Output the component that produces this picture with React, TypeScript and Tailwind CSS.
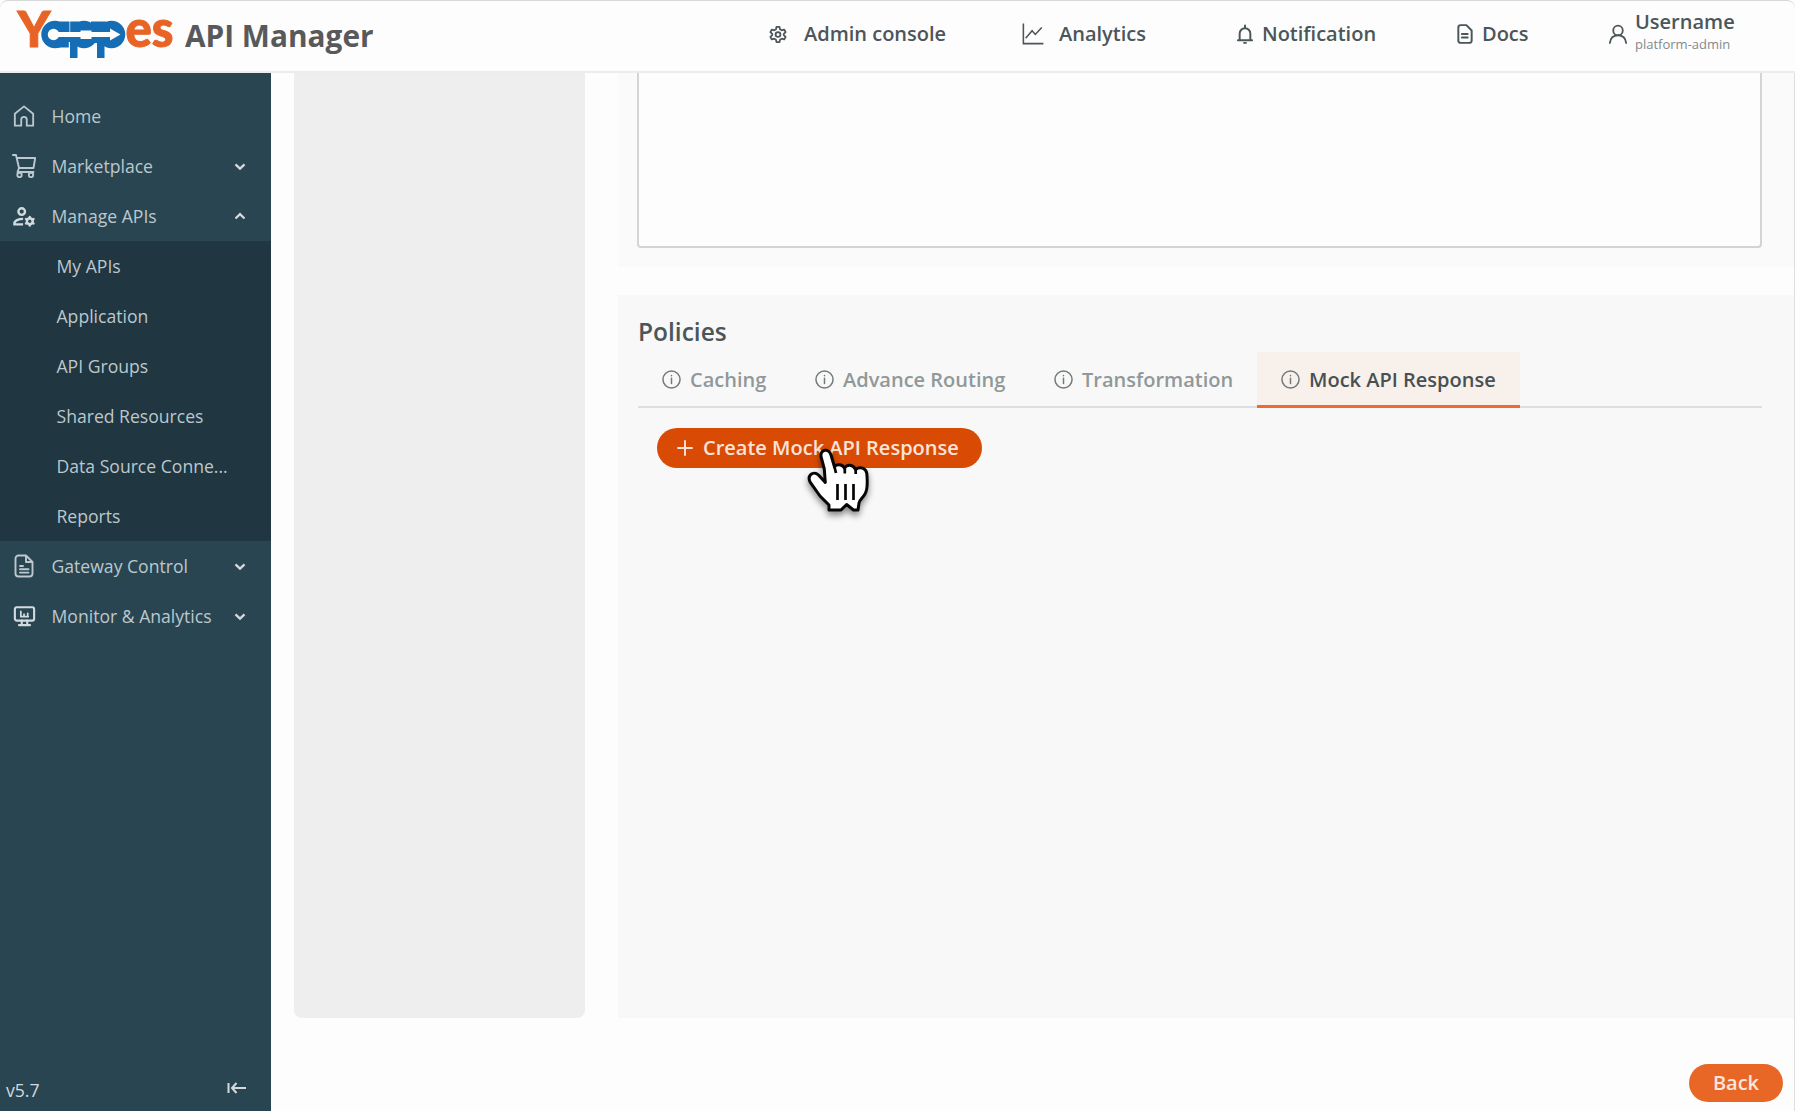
import type { ReactNode, SVGProps } from 'react';

const Stroke = (props: SVGProps<SVGSVGElement>) => (
  <svg viewBox="0 0 24 24" fill="none" stroke="currentColor" strokeLinecap="round" strokeLinejoin="round" {...props} />
);

const Logo = () => (
  <svg viewBox="16 7 160 54" className="h-[54px] w-[160px] shrink-0 overflow-visible" role="img" aria-label="Yappes">
    <g fill="#156db5">
      <circle cx="55" cy="34.5" r="13.700" />
      <circle cx="84" cy="34.5" r="13.700" />
      <circle cx="111.5" cy="34.5" r="13.700" />
      <path d="M60 21.500H79V31H60ZM91 21.500H106V31H91ZM56 38H69V47.500H56Z" />
      <path d="M66 26H101V43H66ZM70 36H77.500V58H70ZM97 36H104.500V58H97Z" />
    </g>
    <g fill="#fdfdfd">
      <circle cx="53.500" cy="34.500" r="5.700" />
      <path d="M54 32H110V28.500L120.500 34.500L110 40.500V37H54Z" />
      <path d="M80.500 30.500H91.500V39H80.500Z" />
      <path d="M69.500 21H70.200V32.500H69.500ZM68.800 42H70V49H68.800Z" />
    </g>
    <g fontFamily="Lato" fontWeight="900" fill="#e86426" stroke="#e86426" strokeWidth="1">
      <text x="17.500" y="47" fontSize="49.500" textLength="33" lengthAdjust="spacingAndGlyphs">Y</text>
      <text x="125.500" y="47.200" fontSize="51" textLength="48" lengthAdjust="spacingAndGlyphs">es</text>
    </g>
  </svg>
);

const Gear = () => (
  <Stroke className="h-[19px] w-[18px]" strokeWidth={2.400}>
    <path d="M10 1.800h4l.7 3.300 2.300 1.300 3.200-1 2 3.400-2.500 2.300v1.800l2.500 2.300-2 3.400-3.200-1-2.300 1.300-.7 3.300h-4l-.7-3.300L7 17.600l-3.200 1-2-3.400 2.500-2.300v-1.800L1.800 8.800l2-3.400 3.200 1 2.300-1.300z" />
    <circle cx="12" cy="12" r="3.200" />
  </Stroke>
);
const ChartLine = () => (
  <Stroke className="size-[22px]" strokeWidth={1.700} strokeLinecap="square" strokeLinejoin="miter">
    <path d="M1.500 1.500V22.500H22.500M4.500 16L11 8.500L14.500 12.500L21 5.500" />
  </Stroke>
);
const Bell = () => (
  <Stroke viewBox="0 0 18 22" className="h-5 w-4" strokeWidth={2.200}>
    <path d="M1 18H17M3 18V10.500a6 6 0 0 1 12 0V18M9 4V1.500M8 21h2" />
  </Stroke>
);
const FileSmall = () => (
  <Stroke viewBox="0 0 18 22" className="h-5 w-4" strokeWidth={2.200}>
    <path d="M10.500 1H4a2.500 2.500 0 0 0-2.500 2.500v15A2.500 2.500 0 0 0 4 21h10a2.500 2.500 0 0 0 2.500-2.500V7zM5.500 11H12M5.500 15H12" />
  </Stroke>
);
const User = () => (
  <Stroke viewBox="0 0 20 22" className="h-5 w-[18px]" strokeWidth={2}>
    <circle cx="10" cy="7" r="5.300" />
    <path d="M1 21C1.500 15.500 5 12.500 10 12.500S18.500 15.500 19 21" />
  </Stroke>
);

const Info = () => (
  <Stroke className="size-[19px] shrink-0 text-[#74797b]" strokeWidth={1.900}>
    <circle cx="12" cy="12" r="10.800" />
    <path d="M12 10.500v6.500M12 7v.2" />
  </Stroke>
);

const Home = () => (
  <Stroke className="h-[22px] w-[22px]" strokeWidth={2}>
    <path d="M2 22.500V9.500L12 1.500l10 8v13h-7v-6.500a3 3 0 0 0-6 0v6.500z" />
  </Stroke>
);
const Cart = () => (
  <Stroke className="size-6" strokeWidth={1.900}>
    <path d="M.8 1H4l3 13h14.500L23.200 4H5M7 14l-1.500 4H21.500" />
    <circle cx="7.500" cy="21" r="2.200" />
    <circle cx="19" cy="21" r="2.200" />
  </Stroke>
);
const UserGear = () => (
  <Stroke className="mt-1 size-[22px] text-[#d3dade]" strokeWidth={2.600}>
    <circle cx="9.500" cy="5" r="3.600" />
    <path d="M11 13C6 13 1.500 15 1.500 18v1H11" strokeLinecap="butt" />
    <circle cx="18.300" cy="15.500" r="3.200" />
    <path d="M18.300 10.800v1.500M18.300 18.700v1.500M14.200 13.100l1.300.8M21.100 17.100l1.300.8M14.200 17.900l1.300-.8M21.100 13.900l1.300-.8" />
  </Stroke>
);
const FileText = () => (
  <Stroke viewBox="0 0 20 24" className="h-6 w-5" strokeWidth={1.900}>
    <path d="M12 1.500H4.500a3 3 0 0 0-3 3v15a3 3 0 0 0 3 3h11a3 3 0 0 0 3-3V8zV8h6.500M6 12h3M6 15.300h8.500M6 18.600h8.500" />
  </Stroke>
);
const Monitor = () => (
  <Stroke className="h-[22px] w-[23px] text-[#d3dade]" strokeWidth={2.300}>
    <rect x="1.500" y="2.500" width="21" height="14.500" rx="2" />
    <path d="M9 17v4.500M15 17v4.500M6 22h12" />
    <path d="M8 7v5.500M11.500 10v2.500M15.500 9v3.500M8 12.800h8" strokeWidth={1.900} />
  </Stroke>
);
const Chevron = ({ up }: { up?: boolean }) => (
  <Stroke viewBox="0 0 12 12" className="mr-[25px] size-3 text-[#d3dade]" strokeWidth={2.300} strokeLinecap="butt" strokeLinejoin="miter">
    <path d={up ? 'M1.500 8.500L6 4.200L10.500 8.500' : 'M1.500 4.300L6 8.600L10.500 4.300'} />
  </Stroke>
);
const Collapse = () => (
  <Stroke viewBox="0 0 20 12" className="-mt-1 h-3 w-5" strokeWidth={2} strokeLinecap="butt" strokeLinejoin="miter">
    <path d="M1.500 1V11M19 6H5M9.500 1L5 6L9.500 11" />
  </Stroke>
);

const Hand = () => (
  <svg viewBox="0 0 64 68" className="pointer-events-none absolute top-[19px] left-[151px] h-[68px] w-16 overflow-visible drop-shadow-[0_4px_3px_rgba(0,0,0,0.45)]">
    <path
      d="M13 9.500C12 2 21 1 23 8L26.500 20C28 17 34 16.500 36.500 21C39 17 45 17 47.500 22.500C52 19 58 21 58.800 26.500C59.500 34 60 42 57 47C54.500 51 51.500 53 51 56L50 63H45.500L38.600 57.500L33 63H21V58L12 49L2.500 35.700C-1.500 29 5 23 10.500 28L17.300 35.500L16.300 22Z"
      fill="#fff"
      stroke="#060606"
      strokeWidth="3"
      strokeLinejoin="round"
    />
    <path d="M26.500 20L28 26M36.800 21V26.500M47.700 23V27M29.500 37V53M37.500 37V53M45.500 37V53" fill="none" stroke="#060606" strokeWidth="2.700" />
  </svg>
);

const MenuRow = ({ icon, label, children }: { icon: ReactNode; label: string; children?: ReactNode }) => (
  <div className="flex h-[50px] items-center">
    <span className="flex w-12 shrink-0 justify-center">{icon}</span>
    <span className="ml-[3.500px] flex-1 whitespace-nowrap">{label}</span>
    {children}
  </div>
);

const manageItems = ['My APIs', 'Application', 'API Groups', 'Shared Resources', 'Data Source Conne...', 'Reports'];

const Tab = ({ label, width, active }: { label: string; width: string; active?: boolean }) => (
  <div
    className={`-mb-[2px] flex h-[56px] items-center gap-[9px] border-b-[3px] pt-[2px] pl-6 text-[20px] font-semibold whitespace-nowrap ${width} ${
      active ? 'border-[#ee6b30] bg-[#f8f0eb] text-[#495052]' : 'border-transparent text-[#909899]'
    }`}
  >
    <Info />
    {label}
  </div>
);

export default function App() {
  return (
    <div className="flex h-[1111px] w-[1795px] flex-col overflow-hidden bg-[#fdfdfd] font-['Open_Sans',sans-serif] text-[#4b5659]">
      <header className="flex h-[73px] shrink-0 items-start rounded-t-lg border-t border-b-2 border-t-[#d8d8d8] border-b-[#ececec]">
        <div className="mt-[6px] ml-4 w-[169px]"><Logo /></div>
        <h1 className="mt-[12.500px] text-[29.800px] leading-[44px] font-bold whitespace-nowrap text-[#58595b]">API Manager</h1>
        <nav className="ml-auto flex h-[66px] items-center text-[20px] font-semibold whitespace-nowrap">
          <div className="flex w-[253px] items-center gap-[17px]"><Gear />Admin console</div>
          <div className="flex w-[215px] items-center gap-[15px]"><ChartLine />Analytics</div>
          <div className="flex w-[220px] items-center gap-[9px]"><Bell />Notification</div>
          <div className="flex w-[152px] items-center gap-[9px]"><FileSmall />Docs</div>
          <div className="flex w-[186px] items-center gap-[8px]">
            <User />
            <div className="-mt-[5px] flex flex-col">
              <span className="leading-[25px]">Username</span>
              <span className="text-[13px] leading-[20px] font-medium text-[#84898b]">platform-admin</span>
            </div>
          </div>
        </nav>
      </header>

      <div className="flex min-h-0 flex-1">
        <aside className="flex w-[271px] shrink-0 flex-col bg-[#294552] pt-[18px] text-[17.600px] text-[#bcc8cd]">
          <MenuRow icon={<Home />} label="Home" />
          <MenuRow icon={<Cart />} label="Marketplace"><Chevron /></MenuRow>
          <MenuRow icon={<UserGear />} label="Manage APIs"><Chevron up /></MenuRow>
          <ul className="bg-[#203641]">
            {manageItems.map((item) => (
              <li key={item} className="flex h-[50px] items-center pl-[56.500px] whitespace-nowrap">{item}</li>
            ))}
          </ul>
          <MenuRow icon={<FileText />} label="Gateway Control"><Chevron /></MenuRow>
          <MenuRow icon={<Monitor />} label="Monitor & Analytics"><Chevron /></MenuRow>
          <div className="mt-auto mb-2 flex items-center justify-between pr-6 pl-[6px] text-[#d3dade]">
            <span>v5.7</span>
            <Collapse />
          </div>
        </aside>

        <main className="flex min-w-0 flex-1 flex-col border-r border-[#dedede] pl-[23px]">
          <div className="flex h-[945px]">
            <div className="w-[291px] shrink-0 rounded-b-lg bg-[#eeeeee]" />
            <div className="ml-[33px] flex flex-1 flex-col">
              <section className="h-[194px] bg-[#fafafa] pr-[32px] pl-[19px]">
                <div className="h-[175px] rounded-b border-x-2 border-b-2 border-[#d4d4d4] bg-[#fdfdfd]" />
              </section>
              <section className="mt-7 flex-1 bg-[#f8f8f8] pr-[32px] pl-5">
                <h2 className="pt-[19px] text-[24.500px] leading-9 font-semibold">Policies</h2>
                <div className="mt-[2px] flex border-b-2 border-[#dedede]">
                  <Tab label="Caching" width="w-[153px]" />
                  <Tab label="Advance Routing" width="w-[239px]" />
                  <Tab label="Transformation" width="w-[227px]" />
                  <Tab label="Mock API Response" width="w-[263px]" active />
                </div>
                <div className="relative mt-5 ml-[19px] w-[325px]">
                  <button className="flex h-10 w-full items-center gap-[10px] rounded-full bg-[#d94b05] pl-5 text-[20px] font-semibold whitespace-nowrap text-[#fae3d9]">
                    <Stroke viewBox="0 0 16 16" className="size-4 shrink-0" strokeWidth={1.900}><path d="M8 1V15M1 8H15" /></Stroke>
                    Create Mock API Response
                  </button>
                  <Hand />
                </div>
              </section>
            </div>
          </div>
          <button className="mt-[46px] mr-[11px] flex h-[38px] w-[94px] items-center justify-center self-end rounded-full bg-[#e86727] text-[20px] font-semibold text-[#fbe6dc]">
            Back
          </button>
        </main>
      </div>
    </div>
  );
}
